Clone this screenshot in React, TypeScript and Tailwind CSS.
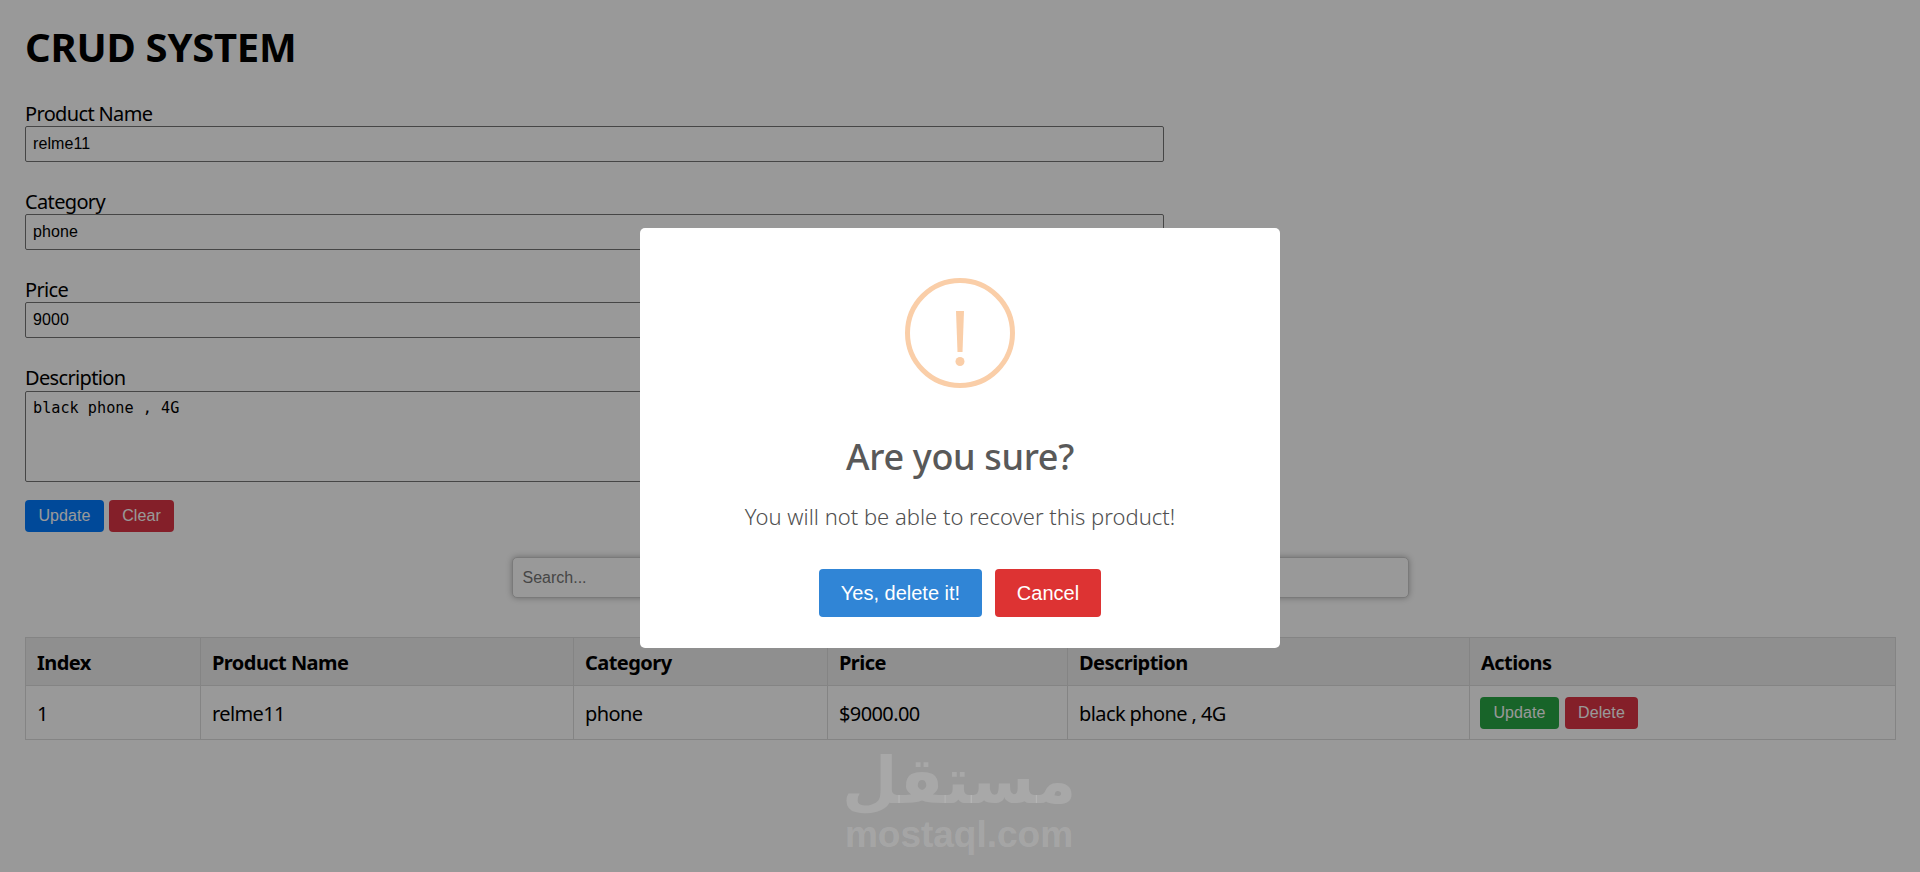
const SANS = "font-['Noto_Sans','Open_Sans',sans-serif]";

function Field({ label, value, first }: { label: string; value: string; first?: boolean }) {
  return (
    <div className={first ? "mt-[28px]" : "mt-[25px]"}>
      <label className="block h-[27px] text-[20px] leading-[29px] tracking-[-0.65px] text-black">{label}</label>
      <input
        readOnly
        value={value}
        className="block h-[36px] w-[1139px] rounded-[2px] border border-[#767676] bg-white px-[7px] font-['Liberation_Sans',sans-serif] text-[16px] tracking-[0.1px] text-black outline-none"
      />
    </div>
  );
}

function Btn({ children, color, className = "" }: { children: string; color: string; className?: string }) {
  return (
    <button className={`h-[32px] rounded-[4px] px-[12px] font-['Liberation_Sans',sans-serif] text-[16px] leading-[18px] tracking-[0.1px] text-white ${color} ${className}`}>
      {children}
    </button>
  );
}

export default function App() {
  return (
    <div className={`relative h-[872px] w-[1920px] overflow-hidden bg-white text-black ${SANS}`}>
      <main className="px-[25px] pt-[24px]">
        <h1 className="h-[47px] text-[40px] font-bold leading-[46px] tracking-[-0.25px]">CRUD SYSTEM</h1>
        <Field label="Product Name" value="relme11" first />
        <Field label="Category" value="phone" />
        <Field label="Price" value="9000" />
        <div className="mt-[25px]">
          <label className="block h-[28px] text-[20px] leading-[29px] tracking-[-0.65px]">Description</label>
          <textarea
            readOnly
            value="black phone , 4G"
            className="block h-[91px] w-[1139px] resize-none rounded-[2px] border border-[#767676] bg-white px-[7px] py-[7px] font-['DejaVu_Sans_Mono',monospace] text-[15.2px] leading-[18px] text-black outline-none"
          />
        </div>
        <div className="mt-[18px] flex gap-[5px]">
          <Btn color="bg-[#007bff]" className="w-[79px]">Update</Btn>
          <Btn color="bg-[#dc3545]" className="w-[65px]">Clear</Btn>
        </div>
        <div className="mt-[25px] flex justify-center">
          <input
            readOnly
            placeholder="Search..."
            className="h-[41px] w-[897px] rounded-[5px] border border-[#cccccc] bg-white px-[10px] font-['Liberation_Sans',sans-serif] text-[16px] text-black shadow-[0_0_6px_rgba(0,0,0,0.3)] outline-none placeholder:text-[#757575]"
          />
        </div>
        <table className="mt-[39px] w-[1870px] table-fixed border-collapse text-[20px]">
          <colgroup>
            <col className="w-[175px]" />
            <col className="w-[373px]" />
            <col className="w-[254px]" />
            <col className="w-[240px]" />
            <col className="w-[402px]" />
            <col className="w-[426px]" />
          </colgroup>
          <thead>
            <tr className="h-[48px] bg-[#eeeeee]">
              {["Index", "Product Name", "Category", "Price", "Description", "Actions"].map((h) => (
                <th key={h} className="border border-[#dddddd] pb-[0px] pl-[11px] pr-[10px] pt-[2px] text-left font-bold leading-[27px] tracking-[-0.55px]">
                  {h}
                </th>
              ))}
            </tr>
          </thead>
          <tbody>
            <tr className="h-[54px]">
              {["1", "relme11", "phone", "$9000.00", "black phone , 4G"].map((c) => (
                <td key={c} className="border border-[#dddddd] pl-[11px] pr-[10px] pt-[2px] leading-[27px] tracking-[-0.6px]">
                  {c}
                </td>
              ))}
              <td className="border border-[#dddddd] px-[10px]">
                <div className="flex gap-[6px]">
                  <Btn color="bg-[#28a745]" className="w-[79px]">Update</Btn>
                  <Btn color="bg-[#dc3545]" className="w-[73px]">Delete</Btn>
                </div>
              </td>
            </tr>
          </tbody>
        </table>
      </main>

      <div className="absolute inset-0 flex items-start justify-center bg-black/40">
        <div className="mt-[228px] flex h-[420px] w-[640px] flex-col items-center rounded-[5px] bg-white pt-[50px] text-[#595959]">
          <div className="flex h-[110px] w-[110px] items-center justify-center rounded-full border-[5px] border-[#facea8] pt-[10px]">
            <svg width="10" height="55" viewBox="0 0 10 55" className="block">
              <polygon points="1,0 9,0 7.5,41 2.5,41" fill="#facea8" />
              <circle cx="5" cy="50.5" r="4.5" fill="#facea8" />
            </svg>
          </div>
          <h2 className="mt-[40px] text-[36px] font-medium leading-[58px] tracking-[-0.35px]">Are you sure?</h2>
          <p className="mt-[14px] text-[22px] font-light leading-[33px] text-[#505050]">You will not be able to recover this product!</p>
          <div className="mt-[36px] flex gap-[13px]">
            <button className="h-[48px] w-[163px] rounded-[4px] bg-[#3085d6] font-['Liberation_Sans',sans-serif] text-[20px] text-white">Yes, delete it!</button>
            <button className="h-[48px] w-[106px] rounded-[4px] bg-[#dd3333] font-['Liberation_Sans',sans-serif] text-[20px] text-white">Cancel</button>
          </div>
        </div>
      </div>

      <div aria-hidden="true" className="absolute left-[841px] top-[746px] flex w-[236px] flex-col items-center text-white/[0.15]">
        <span dir="rtl" className="h-[70px] font-['DejaVu_Sans',sans-serif] text-[64px] font-bold leading-[70px]">مستقل</span>
        <span className="mt-[1px] font-['Liberation_Sans',sans-serif] text-[37px] font-bold leading-[36px]">mostaql.com</span>
      </div>
    </div>
  );
}
